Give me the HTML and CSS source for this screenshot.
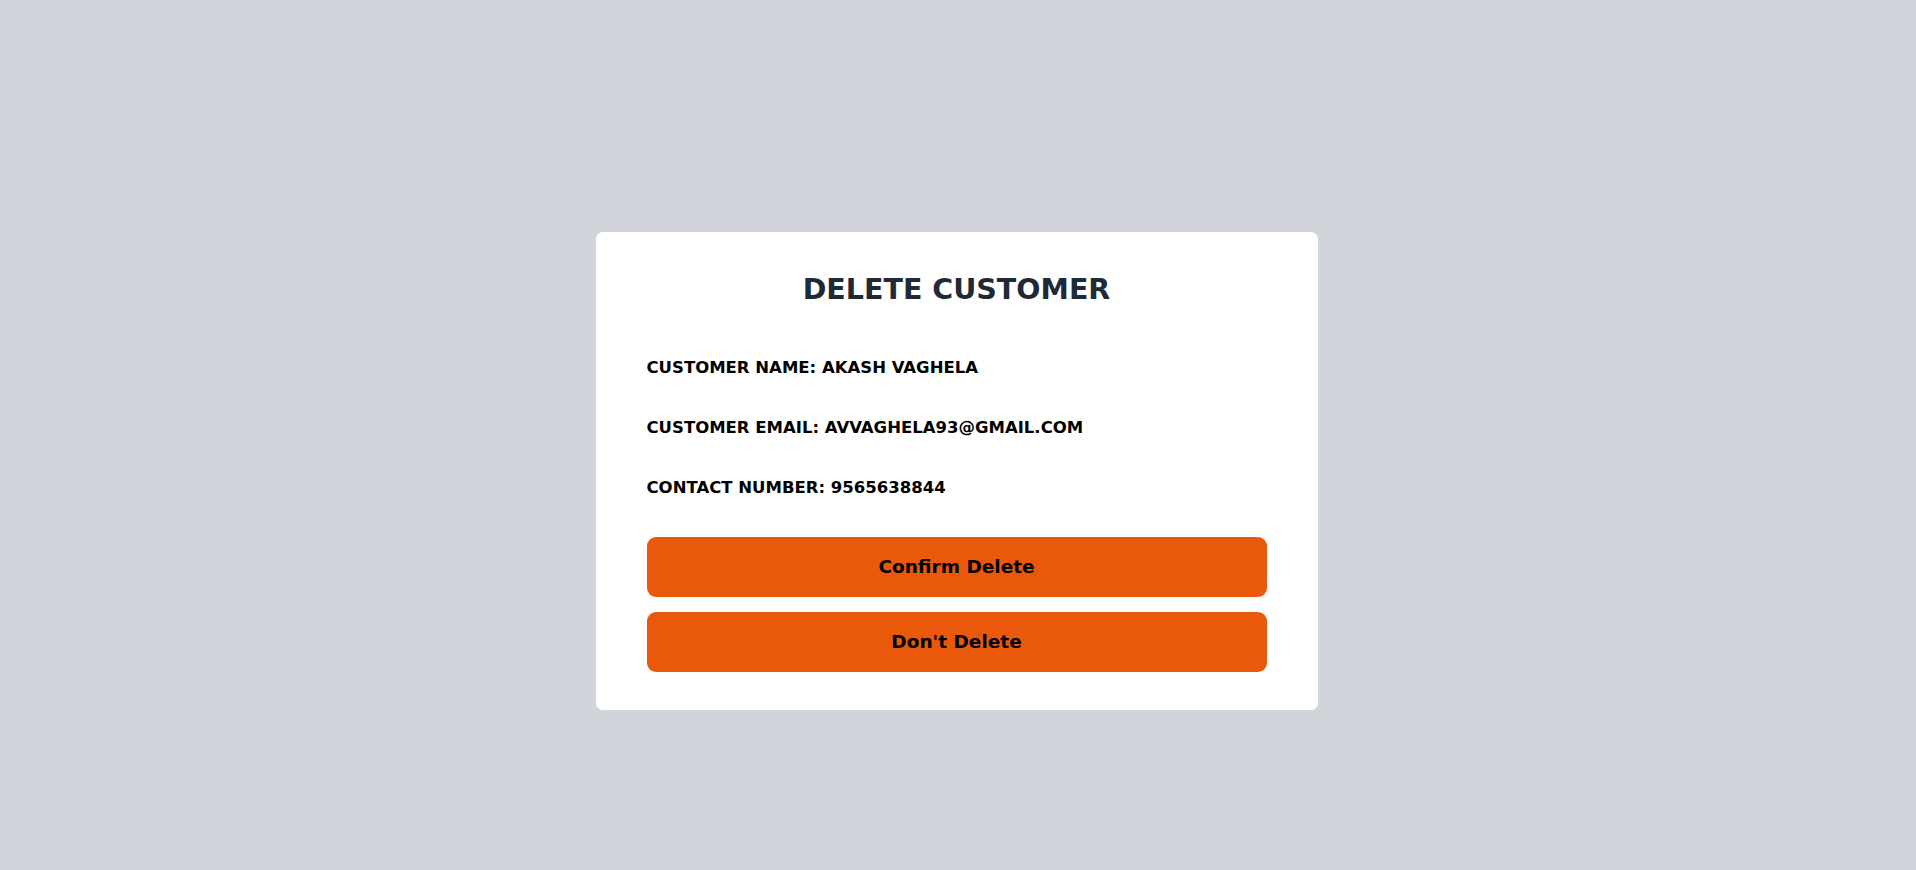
FILE: index.html
```html
<!DOCTYPE html>
<html lang="en">
<head>
<meta charset="utf-8">
<title>Delete Customer</title>
<link rel="stylesheet" href="styles.css">
</head>
<body>
<main class="page">
  <section class="card">
    <h1 class="title">DELETE CUSTOMER</h1>
    <div class="details">
      <p class="row">CUSTOMER NAME: AKASH VAGHELA</p>
      <p class="row">CUSTOMER EMAIL: AVVAGHELA93@GMAIL.COM</p>
      <p class="row">CONTACT NUMBER: 9565638844</p>
    </div>
    <div class="actions">
      <button class="btn">Confirm Delete</button>
      <button class="btn">Don't Delete</button>
    </div>
  </section>
</main>
</body>
</html>
```

FILE: styles.css
```css
* { box-sizing: border-box; }
html, body { margin: 0; padding: 0; }
body {
  background: #d1d5db;
  font-family: "DejaVu Sans", "Open Sans", sans-serif;
}
.page {
  height: 100vh;
  padding-top: 71px;
  padding-right: 3px;
  display: flex;
  align-items: center;
  justify-content: center;
}
.card {
  width: 722px;
  background: #ffffff;
  border-radius: 7px;
  padding: 40px 51px 38px;
}
.title {
  margin: 0;
  text-align: center;
  font-size: 28.5px;
  line-height: 36px;
  font-weight: 700;
  color: #1f2937;
}
.details {
  margin-top: 48px;
  display: flex;
  flex-direction: column;
  gap: 36px;
}
.row {
  margin: 0;
  font-size: 16.5px;
  line-height: 24px;
  font-weight: 700;
  color: #000;
}
.actions {
  margin-top: 37px;
  display: flex;
  flex-direction: column;
  gap: 15px;
}
.btn {
  height: 60px;
  border: none;
  border-radius: 9px;
  background: #ea580c;
  color: #000;
  font-family: inherit;
  font-size: 18.5px;
  font-weight: 700;
  cursor: pointer;
}
```
